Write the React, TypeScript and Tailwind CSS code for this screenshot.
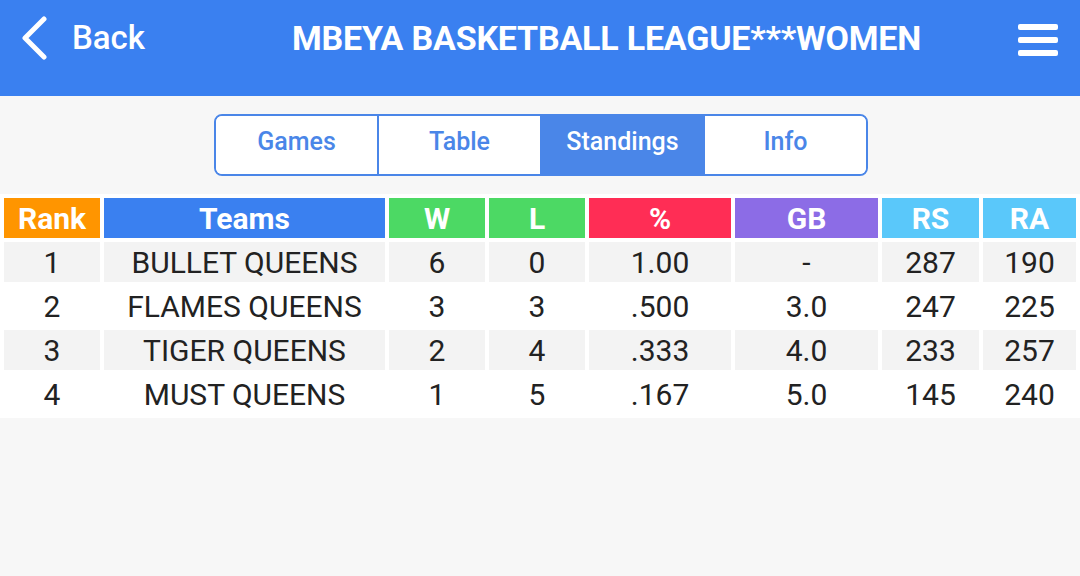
const headers = [
  { label: 'Rank', color: 'bg-[#ff9500]' },
  { label: 'Teams', color: 'bg-[#3a80f0]' },
  { label: 'W', color: 'bg-[#4cd964]' },
  { label: 'L', color: 'bg-[#4cd964]' },
  { label: '%', color: 'bg-[#ff2d55]' },
  { label: 'GB', color: 'bg-[#8c6ce6]' },
  { label: 'RS', color: 'bg-[#5ac8fa]' },
  { label: 'RA', color: 'bg-[#5ac8fa]' },
];

const rows = [
  ['1', 'BULLET QUEENS', '6', '0', '1.00', '-', '287', '190'],
  ['2', 'FLAMES QUEENS', '3', '3', '.500', '3.0', '247', '225'],
  ['3', 'TIGER QUEENS', '2', '4', '.333', '4.0', '233', '257'],
  ['4', 'MUST QUEENS', '1', '5', '.167', '5.0', '145', '240'],
];

const tabs = ['Games', 'Table', 'Standings', 'Info'];

export default function App() {
  return (
    <div className="min-h-[576px] bg-[#f7f7f7] font-['Roboto',sans-serif]">
      <header className="flex h-[96px] items-center justify-between bg-[#3a80f0] pb-[20px] pl-[20px] pr-[22px] text-white">
        <div className="flex items-center gap-[24px]">
          <svg width="28" height="44" viewBox="0 0 28 44">
            <path d="M24 3 L5 22 L24 41" fill="none" stroke="white" strokeWidth="5" strokeLinecap="round" strokeLinejoin="round" />
          </svg>
          <span className="text-[33px] font-medium">Back</span>
        </div>
        <h1 className="ml-[50px] text-[34px] font-bold tracking-[-0.2px]">MBEYA BASKETBALL LEAGUE***WOMEN</h1>
        <div className="mt-[4px] flex w-[40px] flex-col gap-[7px]">
          <span className="h-[6px] rounded-[2px] bg-white" />
          <span className="h-[6px] rounded-[2px] bg-white" />
          <span className="h-[6px] rounded-[2px] bg-white" />
        </div>
      </header>

      <div className="flex justify-center pt-[18px]">
        <div className="ml-[2px] flex h-[62px] w-[654px] overflow-hidden rounded-[8px] border-2 border-[#4a86e8]">
          {tabs.map((t, i) => (
            <div
              key={t}
              className={
                'flex flex-1 items-center justify-center pb-[6px] text-[25px] font-medium ' +
                (i > 0 ? 'border-l-2 border-[#4a86e8] ' : '') +
                (t === 'Standings' ? 'bg-[#4a86e8] text-white' : 'bg-white text-[#4a86e8]')
              }
            >
              {t}
            </div>
          ))}
        </div>
      </div>

      <div className="mt-[18px] grid grid-cols-[96px_281px_96px_96px_142px_143px_97px_1fr] gap-[4px] bg-white p-[4px] text-center text-[30px] text-[#222]">
        {headers.map((h) => (
          <div key={h.label} className={`${h.color} flex h-[40px] items-center justify-center font-bold text-white`}>
            {h.label}
          </div>
        ))}
        {rows.map((r, ri) =>
          r.map((c, ci) => (
            <div
              key={ri + '-' + ci}
              className={`flex h-[40px] items-center justify-center ${ri % 2 === 0 ? 'bg-[#f3f3f3]' : 'bg-white'}`}
            >
              {c}
            </div>
          ))
        )}
      </div>
    </div>
  );
}
